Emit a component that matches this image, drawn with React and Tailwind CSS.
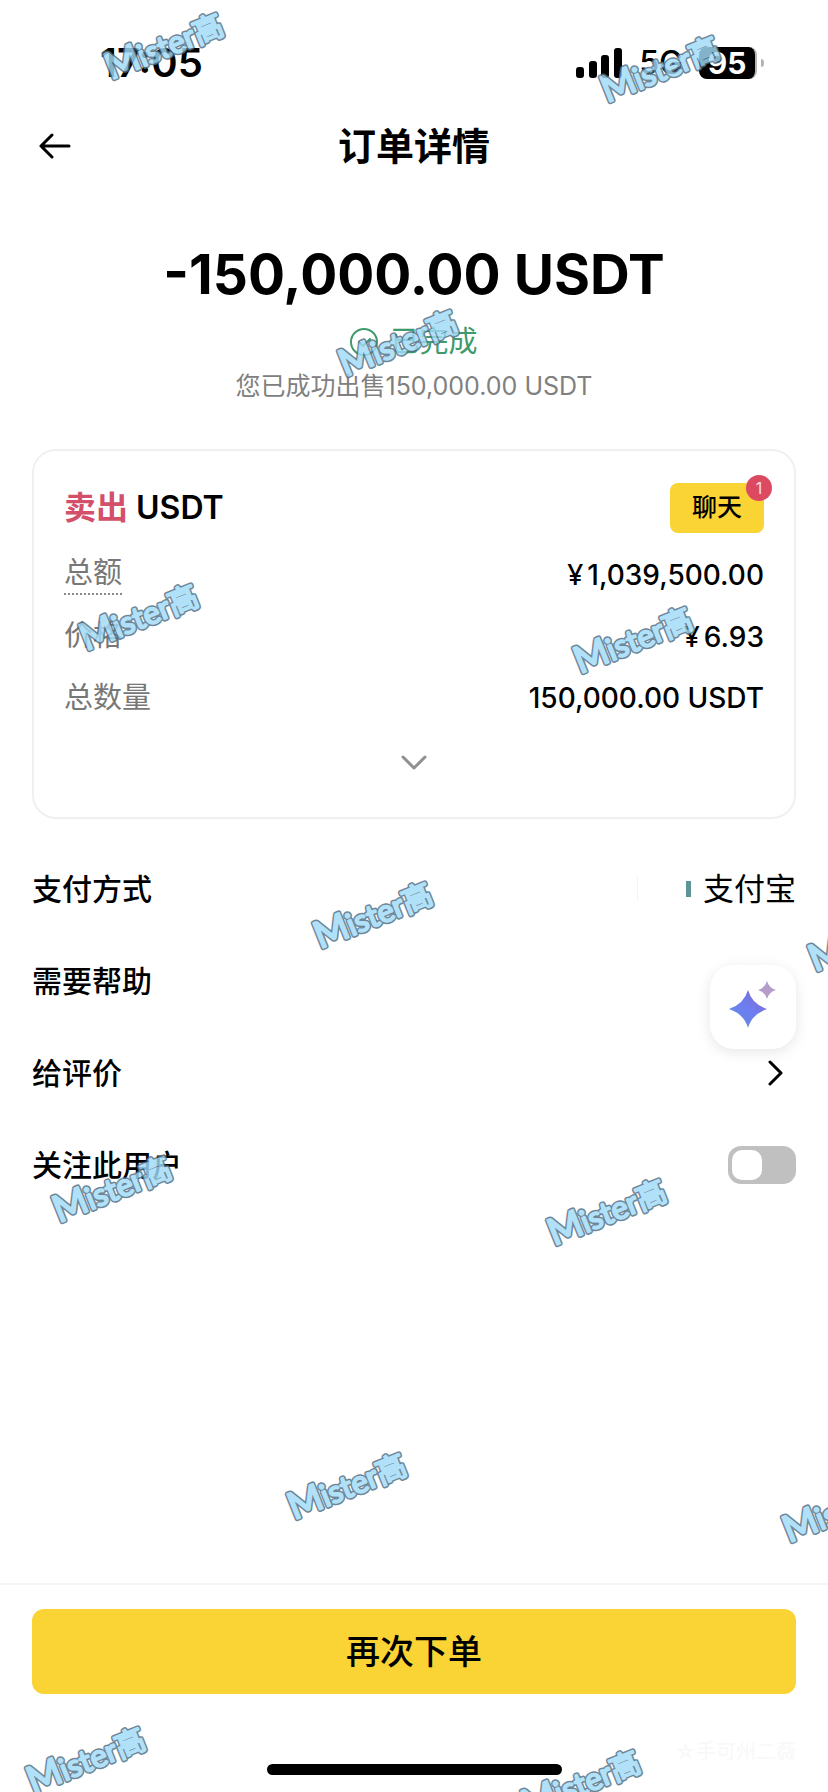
import { useState } from "react";

const marks = [
  { x: 103, y: 9 },
  { x: 599, y: 32 },
  { x: 337, y: 306 },
  { x: 78, y: 580 },
  { x: 572, y: 603 },
  { x: 312, y: 878 },
  { x: 807, y: 901 },
  { x: 51, y: 1152 },
  { x: 546, y: 1175 },
  { x: 286, y: 1449 },
  { x: 781, y: 1472 },
  { x: 25, y: 1723 },
  { x: 520, y: 1746 },
];

const rows = [
  { label: "总额", value: "1,039,500.00", yuan: true, dotted: true },
  { label: "价格", value: "6.93", yuan: true },
  { label: "总数量", value: "150,000.00 USDT" },
];

function MarkText() {
  return (
    <>
      <tspan fontSize="37">M</tspan>
      <tspan fontSize="31">ister</tspan>
      <tspan fontSize="30">高</tspan>
    </>
  );
}

function Watermark() {
  return (
    <svg
      aria-hidden="true"
      className="absolute inset-0 w-full h-full pointer-events-none font-['Lato','Noto_Sans_CJK_SC',sans-serif]"
    >
      {marks.map((m) => (
        <g
          key={`${m.x}-${m.y}`}
          transform={`translate(${m.x + 8} ${m.y + 71}) rotate(-22)`}
          strokeLinejoin="round"
          strokeLinecap="round"
          opacity="0.82"
        >
          <text fill="#4f6d82" stroke="#4f6d82" strokeWidth="5">
            <MarkText />
          </text>
          <text fill="#a0dbf8" stroke="#a0dbf8" strokeWidth="2">
            <MarkText />
          </text>
        </g>
      ))}
    </svg>
  );
}

function StatusBar() {
  return (
    <div className="flex items-center justify-between h-[126px] pl-[100px] pr-16">
      <span className="text-[40px] font-semibold leading-none">17:05</span>

      <div className="flex items-center">
        <svg width="47" height="30" viewBox="0 0 47 30" className="mr-4">
          <rect x="0" y="19" width="8" height="11" rx="3" />
          <rect x="13" y="13" width="8" height="17" rx="3" />
          <rect x="25" y="7" width="8" height="23" rx="3" />
          <rect x="38" y="0" width="8" height="30" rx="3" />
        </svg>
        <span className="text-[32px] font-medium leading-none mr-4">5G</span>
        <div className="w-[58px] h-8 rounded-lg bg-black border-r-2 border-[#b5b5b5] text-white text-[30px] font-bold flex items-center justify-center">
          95
        </div>
        <div className="w-[3px] h-2 ml-1 rounded-r bg-[#b5b5b5]" />
      </div>
    </div>
  );
}

function App() {
  const [follow, setFollow] = useState(false);

  return (
    <div className="relative min-h-screen overflow-hidden flex flex-col bg-white text-black font-['Inter','Noto_Sans_CJK_SC',sans-serif]">
      <StatusBar />

      <header className="grid grid-cols-[64px_1fr_64px] items-center h-10 px-8">
        <button aria-label="返回" className="pl-[7px]">
          <svg width="32" height="26" viewBox="0 0 32 26" fill="none" stroke="currentColor" strokeWidth="3" strokeLinecap="round" strokeLinejoin="round">
            <path d="M30 13H2M13 2L2 13L13 24" />
          </svg>
        </button>
        <h1 className="text-[38px] leading-none font-semibold text-center">订单详情</h1>
      </header>

      <section className="flex flex-col items-center pt-20">
        <p className="text-[55px] leading-[56px] font-bold">-150,000.00 USDT</p>
        <p className="flex items-center gap-3 mt-4 h-12 text-[29px] text-[#3f9a6c]">
          <svg width="28" height="28" viewBox="0 0 28 28" fill="none" stroke="currentColor" strokeWidth="2" strokeLinecap="round" strokeLinejoin="round">
            <circle cx="14" cy="14" r="13" />
            <path d="M9 14L13 18L20 11" />
          </svg>
          已完成
        </p>
        <p className="text-[25px] leading-10 text-[#808080]">您已成功出售150,000.00 USDT</p>
      </section>

      <section className="mx-8 mt-[43px] px-[30px] pt-8 pb-[46px] border-2 border-[#f0f0f0] rounded-3xl">
        <div className="flex items-center justify-between h-[50px]">
          <h2 className="flex items-center gap-2 text-[32px] leading-none font-semibold">
            <span className="text-[#d3506a]">卖出</span>
            <span>USDT</span>
          </h2>
          <button className="relative w-[94px] h-[50px] rounded-lg bg-[#fad335] text-[25px] font-medium">
            聊天
            <span className="absolute -top-2 -right-2 size-[26px] rounded-full bg-[#dc4a62] text-[#fbdde2] text-base font-normal flex items-center justify-center">
              1
            </span>
          </button>
        </div>

        <dl className="mt-[10px]">
          {rows.map((row) => (
            <div key={row.label} className="flex items-center justify-between h-[62px]">
              <dt className="text-[29px] leading-10 text-[#777777]">
                <span className={row.dotted ? "inline-block border-b-2 border-dotted border-[#888888]" : ""}>
                  {row.label}
                </span>
              </dt>
              <dd className="flex items-baseline gap-1 text-[28px] font-medium">
                {row.yuan && <span className="font-['Noto_Sans',sans-serif]">¥</span>}
                {row.value}
              </dd>
            </div>
          ))}
        </dl>

        <button aria-label="展开" className="block mx-auto mt-[26px]">
          <svg width="26" height="16" viewBox="0 0 26 16" fill="none" stroke="#909090" strokeWidth="3" strokeLinecap="round" strokeLinejoin="round">
            <path d="M2 2L13 13L24 2" />
          </svg>
        </button>
      </section>

      <main className="flex-1 px-8 pt-6 text-[30px] font-medium">
        <div className="flex items-center justify-between h-[92px]">
          <span>支付方式</span>
          <span className="flex items-center text-[31px] font-normal">
            <span className="w-px h-6 mr-12 bg-[#f3f3f3]" />
            <span className="w-[5px] h-4 mr-3 bg-[#5f9496]" />
            支付宝
          </span>
        </div>

        <div className="relative flex items-center h-[92px]">
          <span>需要帮助</span>
          <button aria-label="智能助手" className="absolute right-0 top-[30px] w-[86px] h-[84px] rounded-3xl bg-white shadow-[0_3px_14px_rgba(0,0,0,0.1)]">
            <svg width="86" height="84" viewBox="0 0 86 84">
              <defs>
                <linearGradient id="star" x1="0" y1="1" x2="1" y2="0">
                  <stop offset="0" stopColor="#5f8fd8" />
                  <stop offset="0.5" stopColor="#6e7df2" />
                  <stop offset="1" stopColor="#8467c8" />
                </linearGradient>
              </defs>
              <path d="M38 25Q42 39 57 44Q42 49 38 63Q34 49 19 44Q34 39 38 25Z" fill="url(#star)" />
              <path d="M57 16Q59 23 66 25Q59 27 57 34Q55 27 48 25Q55 23 57 16Z" fill="#b49ccb" />
            </svg>
          </button>
        </div>

        <a href="#review" className="flex items-center justify-between h-[92px] pr-3">
          <span>给评价</span>
          <svg width="16" height="26" viewBox="0 0 16 26" fill="none" stroke="currentColor" strokeWidth="3" strokeLinecap="round" strokeLinejoin="round">
            <path d="M2 2L13 13L2 24" />
          </svg>
        </a>

        <label className="flex items-center justify-between h-[92px]">
          <span>关注此用户</span>
          <input
            type="checkbox"
            role="switch"
            checked={follow}
            onChange={(e) => setFollow(e.target.checked)}
            className="appearance-none w-[68px] h-[38px] p-1 rounded-[13px] bg-[#c0c0c0] checked:bg-[#fad335] before:block before:size-[30px] before:rounded-[10px] before:bg-white checked:before:ml-auto"
          />
        </label>
      </main>

      <footer className="border-t-2 border-[#f5f5f5] px-8 pt-6 pb-[17px]">
        <button className="w-full h-[85px] rounded-xl bg-[#fad335] text-[34px] font-medium">再次下单</button>
        <p className="mt-[46px] h-6 text-xl leading-6 text-right text-[#f8f8f8]">☆手可州二薇</p>
        <div className="w-[295px] h-[11px] mx-auto rounded-full bg-black" />
      </footer>

      <Watermark />
    </div>
  );
}

export default App;
